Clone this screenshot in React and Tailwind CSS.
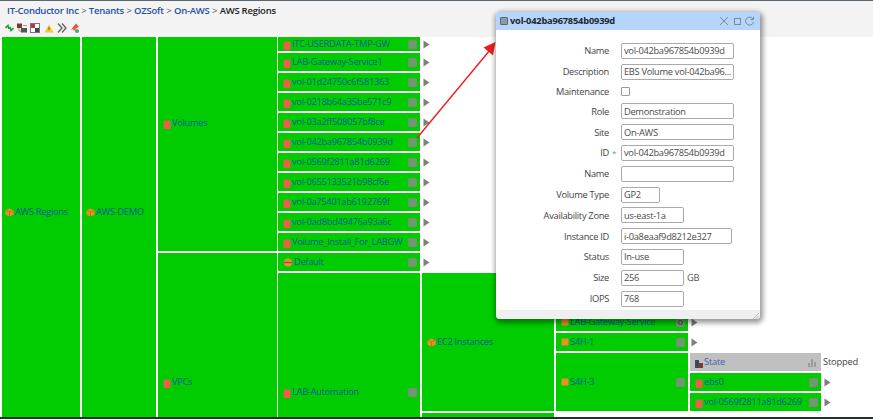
const font = { fontFamily: '"Open Sans", "Noto Sans", sans-serif' };

function RedIcon() {
  return (
    <svg width="8" height="10" viewBox="0 0 8 10" className="shrink-0 mt-[3px]">
      <rect x="0.5" y="0.5" width="7" height="8.5" rx="1" fill="#e8604a" />
      <path d="M1 9.7h1M3.5 9.7h1M6 9.7h1" stroke="#7a6a3a" strokeWidth="0.6" />
    </svg>
  );
}
function OrangeIcon() {
  return (
    <svg width="8" height="8" viewBox="0 0 8 8" className="shrink-0">
      <rect x="0.5" y="0.5" width="7" height="7" rx="1" fill="#f08c2a" />
    </svg>
  );
}
function BoxIcon() {
  return (
    <svg width="9" height="9" viewBox="0 0 9 9" className="shrink-0">
      <path d="M4.5 0.5L8.5 2.2V6.8L4.5 8.6L0.5 6.8V2.2Z" fill="#ee8d28" />
      <path d="M0.8 2.4L4.5 4L8.2 2.4M4.5 4V8.4" stroke="#a86b22" strokeWidth="0.7" fill="none" />
    </svg>
  );
}
function MixedIcon() {
  return (
    <svg width="10" height="9" viewBox="0 0 10 9" className="shrink-0">
      <ellipse cx="5" cy="4.5" rx="4.5" ry="4" fill="#e88d3a" />
      <path d="M0.5 4.5h9" stroke="#b5473a" strokeWidth="1.4" />
    </svg>
  );
}
function GrayBox({ dots }) {
  return (
    <span className="w-[9px] h-[9px] shrink-0 rounded-[1px] bg-[#6f9a6f] border border-[#7d8a7d] flex items-center justify-center">
      {dots && <span className="w-[5px] h-[5px] rounded-full border border-[#3c4c3c]" />}
    </span>
  );
}
function Tri() {
  return (
    <svg width="7" height="9" viewBox="0 0 7 9" className="shrink-0">
      <path d="M0.5 0.5L6.5 4.5L0.5 8.5Z" fill="#7f7f7f" />
    </svg>
  );
}

function Cell({ label, icon, dots, noBox, pad = "pl-[5px]", className = "" }) {
  return (
    <div className={`bg-[#00cc00] flex items-center ${pad} pr-[3px] overflow-hidden ${className}`}>
      {icon}
      <span className="ml-[1px] text-[#0a5aa0] text-[9.3px] tracking-[-0.3px] leading-none whitespace-nowrap flex-1">
        {label}
      </span>
      {!noBox && <GrayBox dots={dots} />}
    </div>
  );
}

const volumes = [
  "LAB-Gateway-Service1",
  "vol-01d24750c6f581363",
  "vol-0218b64a35be571c9",
  "vol-03a2ff508057bf8ce",
  "vol-042ba967854b0939d",
  "vol-0569f2811a81d6269",
  "vol-0655133521b98cf6e",
  "vol-0a75401ab6192769f",
  "vol-0ad8bd49476a93a6c",
  "Volume_Install_For_LABGW",
];

function Row({ label, icon, width, h = "h-[18px]", dots }) {
  return (
    <div className={`flex items-center shrink-0 ${h}`}>
      <Cell label={label} icon={icon} dots={dots} className={`h-full shrink-0 ${width}`} />
      <span className="pl-[3px] flex items-center">
        <Tri />
      </span>
    </div>
  );
}

const fields = [
  { label: "Name", value: "vol-042ba967854b0939d", w: "w-[113px]" },
  { label: "Description", value: "EBS Volume vol-042ba96...", w: "w-[113px]" },
  { label: "Maintenance", check: true },
  { label: "Role", value: "Demonstration", w: "w-[113px]" },
  { label: "Site", value: "On-AWS", w: "w-[113px]" },
  { label: "ID", star: true, value: "vol-042ba967854b0939d", w: "w-[113px]" },
  { label: "Name", value: "", w: "w-[113px]" },
  { label: "Volume Type", value: "GP2", w: "w-[39px]" },
  { label: "Availability Zone", value: "us-east-1a", w: "w-[63px]" },
  { label: "Instance ID", value: "i-0a8eaaf9d8212e327", w: "w-[111px]" },
  { label: "Status", value: "In-use", w: "w-[63px]" },
  { label: "Size", value: "256", w: "w-[63px]", unit: "GB" },
  { label: "IOPS", value: "768", w: "w-[63px]" },
];

function Dialog() {
  return (
    <div className="absolute left-[496px] top-[12px] w-[264px] h-[307px] bg-white rounded-[4px] flex flex-col overflow-hidden shadow-[1px_2px_5px_2px_rgba(0,0,0,0.4)]">
      <div className="h-[18px] bg-[#b5d5fb] flex items-center pl-[4px] pr-[3px] shrink-0">
        <span className="w-[8px] h-[8px] bg-[#8d9aa8] border border-[#5f6a75] rounded-[1px] mr-[2px]" />
        <span className="text-[9.3px] tracking-[-0.2px] font-bold text-[#1c2530] flex-1 leading-none">vol-042ba967854b0939d</span>
        <svg width="40" height="12" viewBox="0 0 40 12" fill="none" stroke="#7d8a99" strokeWidth="1">
          <path d="M3 2L11 10M11 2L3 10" />
          <rect x="17.5" y="3.5" width="6" height="6" />
          <path d="M36 4A4 4 0 1 0 36.5 7M36.5 1.5V4.5H33.5" />
        </svg>
      </div>
      <div className="flex-1 flex flex-col pt-[13px] gap-[4.8px]">
        {fields.map((f, i) => (
          <div
            key={i}
            className={`flex items-center ${f.check ? "h-[14px]" : "h-[16px]"} text-[9.3px] tracking-[-0.3px] leading-none text-[#444]`}
          >
            <span className="w-[113px] text-right shrink-0 whitespace-nowrap">{f.label}</span>
            <span className="w-[12px] shrink-0 text-[#888] pl-[3px] text-[8px]">{f.star ? "*" : ""}</span>
            {f.check ? (
              <span className="w-[9px] h-[9px] border border-[#9a9a9a] rounded-[1px] bg-white" />
            ) : (
              <span className={`${f.w} h-[16px] border border-[#aaa] rounded-[2px] flex items-center pl-[2px] text-[#4a4a4a] whitespace-nowrap overflow-hidden`}>
                {f.value}
              </span>
            )}
            {f.unit && <span className="ml-[3px] text-[#555]">{f.unit}</span>}
          </div>
        ))}
      </div>
      <div className="h-[9px] bg-[#efefef] shrink-0 flex justify-end items-end pr-[1px]">
        <svg width="7" height="7" viewBox="0 0 7 7" stroke="#aaa" strokeWidth="0.8">
          <path d="M1 7L7 1M3.5 7L7 3.5M6 7L7 6" />
        </svg>
      </div>
    </div>
  );
}

const Sep = () => <span className="mx-[2.5px] font-normal">&gt;</span>;

export default function App() {
  return (
    <div className="relative w-[873px] h-[419px] overflow-hidden bg-white flex flex-col" style={font}>
      <div className="h-[37px] shrink-0 bg-[#f3f3f3] border-t border-[#5a6672] flex flex-col">
        <div className="h-[19px] flex items-center pl-[7px] text-[9.5px] tracking-[-0.25px] font-semibold whitespace-nowrap leading-none text-[#555]">
          <span className="text-[#1f4fa8]">IT-Conductor Inc</span>
          <Sep />
          <span className="text-[#1f4fa8]">Tenants</span>
          <Sep />
          <span className="text-[#1f4fa8]">OZSoft</span>
          <Sep />
          <span className="text-[#1f4fa8]">On-AWS</span>
          <Sep />
          <span className="text-[#222]">AWS Regions</span>
        </div>
        <div className="flex items-center gap-[3px] pl-[5px] h-[12px] mt-[2px]">
          <svg width="9" height="10" viewBox="0 0 9 10" fill="none" stroke="#1f9a35" strokeWidth="1.6"><path d="M0.5 5L3 2.5L4 6M8.5 5L6 7.5L5 4" /></svg>
          <svg width="10" height="10" viewBox="0 0 10 10"><rect x="0" y="0.5" width="5" height="4.5" fill="#7a3b2e" /><rect x="4" y="5" width="6" height="4.5" fill="#555" /><path d="M6 2.5h4M2 5v3h2" stroke="#999" fill="none" /></svg>
          <svg width="10" height="10" viewBox="0 0 10 10"><rect x="0.5" y="0.5" width="9" height="9" fill="#fff" stroke="#778" /><rect x="1" y="1" width="4" height="4" fill="#c0392b" /><rect x="5" y="5" width="4" height="4" fill="#445" /></svg>
          <svg width="10" height="9" viewBox="0 0 10 9" className="ml-[1px]"><path d="M5 0.5L9.5 8.5H0.5Z" fill="#f2c832" /><path d="M5 3V6" stroke="#7a5a10" /></svg>
          <svg width="10" height="10" viewBox="0 0 10 10" fill="none" stroke="#666" strokeWidth="1.4"><path d="M1 0.5L5 5L1 9.5M5 0.5L9 5L5 9.5" /></svg>
          <svg width="10" height="10" viewBox="0 0 10 10"><path d="M6 0.5L9 4L6 5.5L4 8L3 6L1 7L3 4Z" fill="#e2554a" /><circle cx="7" cy="8" r="2" fill="#3fb05a" /></svg>
        </div>
      </div>

      <div className="flex-1 flex pl-[2px] min-h-0 overflow-hidden">
        <Cell label="AWS Regions" icon={<BoxIcon />} noBox pad="pl-[3px]" className="w-[78px] shrink-0 pb-[30px]" />
        <Cell label="AWS-DEMO" icon={<BoxIcon />} noBox pad="pl-[4px]" className="w-[74px] shrink-0 ml-[2px] pb-[30px]" />

        <div className="flex-1 flex flex-col gap-[2px] min-w-0 ml-[2px]">
          <div className="flex gap-[1px] h-[214px] shrink-0">
            <Cell label="Volumes" icon={<RedIcon />} noBox className="w-[119px] shrink-0 pb-[42px]" />
            <div className="flex flex-col gap-[2px]">
              <Row width="w-[142px]" label="ITC-USERDATA-TMP-GW" icon={<RedIcon />} h="h-[14px]" />
              {volumes.map((v) => (
                <Row key={v} width="w-[142px]" label={v} icon={<RedIcon />} />
              ))}
            </div>
          </div>

          <div className="flex gap-[1px] flex-1 min-h-0">
            <Cell label="VPCs" icon={<RedIcon />} noBox className="w-[119px] shrink-0 pt-[94px]" />
            <div className="flex-1 flex flex-col gap-[2px] min-w-0">
              <Row width="w-[142px]" label="Default" icon={<MixedIcon />} />
              <div className="flex gap-[2px] flex-1 min-h-0">
                <Cell label="LAB-Automation" icon={<RedIcon />} className="w-[142px] shrink-0 pt-[94px]" />
                <div className="flex flex-col gap-[2px] flex-1 min-w-0">
                  <div className="flex gap-[2px] h-[138px] shrink-0">
                    <Cell label="EC2 Instances" icon={<BoxIcon />} noBox className="w-[132px] shrink-0" />
                    <div className="flex flex-col gap-[2px] flex-1">
                      <div className="h-[18px] w-[132px] shrink-0 bg-[#00cc00]" />
                      <div className="h-[18px] w-[132px] shrink-0 bg-[#00cc00]" />
                      <Row width="w-[132px]" label="LAB-Gateway-Service" icon={<OrangeIcon />} dots />
                      <Row width="w-[132px]" label="S4H-1" icon={<OrangeIcon />} />
                      <div className="flex gap-[2px] h-[58px]">
                        <Cell label="S4H-3" icon={<OrangeIcon />} className="w-[132px] shrink-0" />
                        <div className="flex-1 flex flex-col gap-[2px]">
                          <div className="h-[18px] flex items-center">
                            <div className="w-[131px] h-full bg-[#c0c0c0] flex items-center pl-[5px] pr-[4px] shrink-0">
                              <svg width="8" height="9" viewBox="0 0 8 9" className="shrink-0 mt-[2px]"><rect x="0" y="1" width="4" height="8" fill="#3a4a5a" /><rect x="4" y="4" width="4" height="5" fill="#7a3b2e" /></svg>
                              <span className="ml-[1px] flex-1 text-[9.3px] tracking-[-0.2px] leading-none text-[#3b62b0]">State</span>
                              <svg width="9" height="9" viewBox="0 0 9 9" className="shrink-0" fill="#9a9a9a"><path d="M0 9V5H2V9ZM3 9V1H5V9ZM6 9V4H8V9Z" /></svg>
                            </div>
                            <span className="text-[9.3px] tracking-[-0.2px] leading-none text-[#444] ml-[2px] whitespace-nowrap">Stopped</span>
                          </div>
                          <Row width="w-[131px]" label="ebs0" icon={<RedIcon />} />
                          <Row width="w-[131px]" label="vol-0569f2811a81d6269" icon={<RedIcon />} />
                        </div>
                      </div>
                    </div>
                  </div>
                  <div className="w-[132px] flex-1 bg-[#00cc00]" />
                </div>
              </div>
            </div>
          </div>
        </div>
      </div>
      <div className="h-[2px] shrink-0 bg-[#24302a]" />

      <svg className="absolute left-[410px] top-[35px] pointer-events-none" width="95" height="110" viewBox="0 0 95 110">
        <path d="M7 103L80 15" stroke="#ee1c1c" strokeWidth="1.4" fill="none" />
        <path d="M85.5 7L83 20.5L73.5 12.5Z" fill="#ee1c1c" />
      </svg>

      <Dialog />
    </div>
  );
}
